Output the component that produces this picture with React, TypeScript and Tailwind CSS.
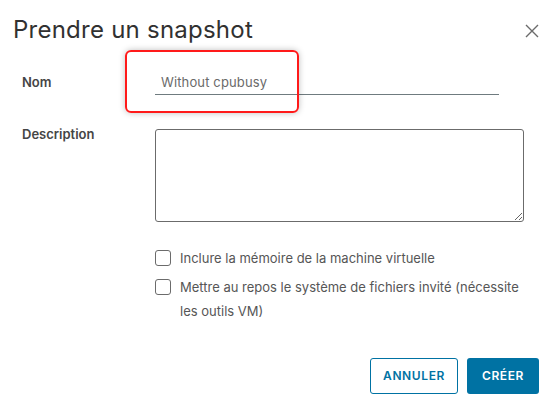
import React from "react";

function CheckRow({ children }: { children: React.ReactNode }) {
  return (
    <label className="flex items-start gap-[9px] text-[13px] leading-[24px] text-[#565656]">
      <span className="mt-[4px] h-[16px] w-[16px] shrink-0 rounded-[3px] border border-[#6b6b6b] bg-white" />
      <span>{children}</span>
    </label>
  );
}

export default function App() {
  return (
    <div
      className="relative h-[408px] w-[555px] overflow-hidden bg-white"
      style={{ fontFamily: "Inter, 'Open Sans', sans-serif" }}
    >
      <div className="flex items-start justify-between pl-[13px] pr-[16px] pt-[14px]">
        <h1 className="text-[24px] leading-[32px] font-normal tracking-[0.01em] text-[#313131]">
          Prendre un snapshot
        </h1>
        <button className="mt-[10px] text-[#6b6b6b]">
          <svg width="14" height="14" viewBox="0 0 14 14" fill="none" stroke="currentColor" strokeWidth="1.4">
            <path d="M1 1L13 13M13 1L1 13" />
          </svg>
        </button>
      </div>

      <div className="mt-[26px] grid grid-cols-[133px_1fr] pl-[22px] pr-[31px]">
        <div className="text-[13px] leading-[20px] font-semibold text-[#454545]">Nom</div>
        <div className="w-[344px] border-b border-[#6f7b7f] pb-[2px] pl-[6px] text-[13px] leading-[20px] tracking-[0.01em] text-[#6a6a6a]">
          Without cpubusy
        </div>

        <div className="mt-[29px] text-[13px] leading-[20px] font-semibold text-[#454545]">Description</div>
        <textarea className="mt-[34px] h-[93px] w-[369px] resize-y rounded-[3px] border border-[#6b6b6b] bg-white" />

        <div />
        <div className="mt-[24px] flex flex-col gap-[5px]">
          <CheckRow>Inclure la mémoire de la machine virtuelle</CheckRow>
          <CheckRow>
            Mettre au repos le système de fichiers invité (nécessite les outils VM)
          </CheckRow>
        </div>
      </div>

      <div className="mt-[35px] flex justify-end gap-[9px] pr-[16px]">
        <button className="h-[36px] w-[88px] rounded-[3px] border border-[#0072a3] bg-white text-[12px] font-semibold tracking-[0.05em] text-[#0072a3]">
          ANNULER
        </button>
        <button className="h-[36px] w-[72px] rounded-[3px] bg-[#0072a3] text-[12px] font-semibold tracking-[0.05em] text-white">
          CRÉER
        </button>
      </div>

      <div className="pointer-events-none absolute left-[125px] top-[50px] h-[63px] w-[174px] rounded-[6px] border-2 border-[#ff1a1a] shadow-[0_0_6px_rgba(0,0,0,0.25)]" />
    </div>
  );
}
